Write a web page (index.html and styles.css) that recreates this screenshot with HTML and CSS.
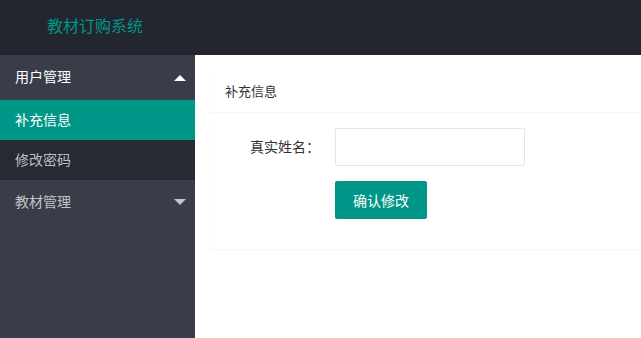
FILE: index.html
```html
<!DOCTYPE html>
<html>
<head>
  <meta charset="utf-8">
  <title>教材订购系统</title>
  <link rel="stylesheet" href="styles.css">
</head>
<body>
  <div class="header">
    <div class="logo">教材订购系统</div>
  </div>

  <div class="main">
    <div class="side">
      <ul class="nav">
        <li class="nav-item open">
          <a class="nav-title" href="#">用户管理<span class="arrow up"></span></a>
          <dl class="child">
            <dd class="this"><a href="#">补充信息</a></dd>
            <dd><a href="#">修改密码</a></dd>
          </dl>
        </li>
        <li class="nav-item">
          <a class="nav-title" href="#">教材管理<span class="arrow down"></span></a>
        </li>
      </ul>
    </div>

    <div class="body">
      <div class="card">
        <div class="card-header">补充信息</div>
        <div class="card-body">
          <div class="form-item">
            <label class="form-label">真实姓名：</label>
            <input class="input" type="text">
          </div>
          <div class="form-item">
            <div class="form-spacer"></div>
            <button class="btn">确认修改</button>
          </div>
        </div>
      </div>
    </div>
  </div>
</body>
</html>
```

FILE: styles.css
```css
* {
  box-sizing: border-box;
}

body {
  margin: 0;
  font-family: "Liberation Sans", "Noto Sans CJK SC", sans-serif;
  font-size: 14px;
  color: #333;
  background: #fff;
}

a {
  text-decoration: none;
}

/* top bar */
.header {
  height: 55px;
  background: #23262e;
}

.logo {
  padding-left: 47px;
  line-height: 53px;
  font-size: 16px;
  color: #009688;
}

.main {
  display: flex;
  height: 283px;
}

/* left menu */
.side {
  width: 195px;
  flex: none;
  background: #393d49;
}

.nav {
  list-style: none;
  margin: 0;
  padding: 0;
}

.nav-title {
  position: relative;
  display: block;
  height: 45px;
  line-height: 45px;
  padding-left: 15px;
  color: rgba(255, 255, 255, .7);
}

.nav-item.open .nav-title {
  color: #fff;
}

.arrow {
  position: absolute;
  right: 9px;
  width: 0;
  height: 0;
  border-left: 6px solid transparent;
  border-right: 6px solid transparent;
}

.arrow.up {
  top: 20px;
  border-bottom: 6px solid #fff;
}

.arrow.down {
  top: 19px;
  border-top: 6px solid rgba(255, 255, 255, .7);
}

.child {
  margin: 0;
  background: rgba(0, 0, 0, .3);
}

.child dd {
  margin: 0;
}

.child a {
  display: block;
  height: 40px;
  line-height: 40px;
  padding-left: 15px;
  color: rgba(255, 255, 255, .7);
}

.child .this a {
  background: #009688;
  color: #fff;
}

/* content */
.body {
  flex: 1;
  padding: 15px 0 15px 15px;
}

.card {
  background: #fff;
  box-shadow: 0 1px 2px 0 rgba(0, 0, 0, .05);
}

.card-header {
  height: 43px;
  line-height: 43px;
  padding-left: 15px;
  border-bottom: 1px solid #f6f6f6;
  font-size: 13px;
  color: #333;
}

.card-body {
  padding: 15px 15px 30px;
}

.form-item {
  display: flex;
  margin-bottom: 15px;
}

.form-item:last-child {
  margin-bottom: 0;
}

.form-label {
  width: 110px;
  padding: 9px 15px;
  line-height: 20px;
  text-align: right;
  color: #333;
}

.form-spacer {
  width: 110px;
}

.input {
  width: 190px;
  height: 38px;
  border: 1px solid #e6e6e6;
  border-radius: 2px;
  padding-left: 10px;
  font: inherit;
  outline: none;
}

.btn {
  height: 38px;
  padding: 0 18px;
  border: none;
  border-radius: 2px;
  background: #009688;
  color: #fff;
  font: inherit;
  cursor: pointer;
}
```
